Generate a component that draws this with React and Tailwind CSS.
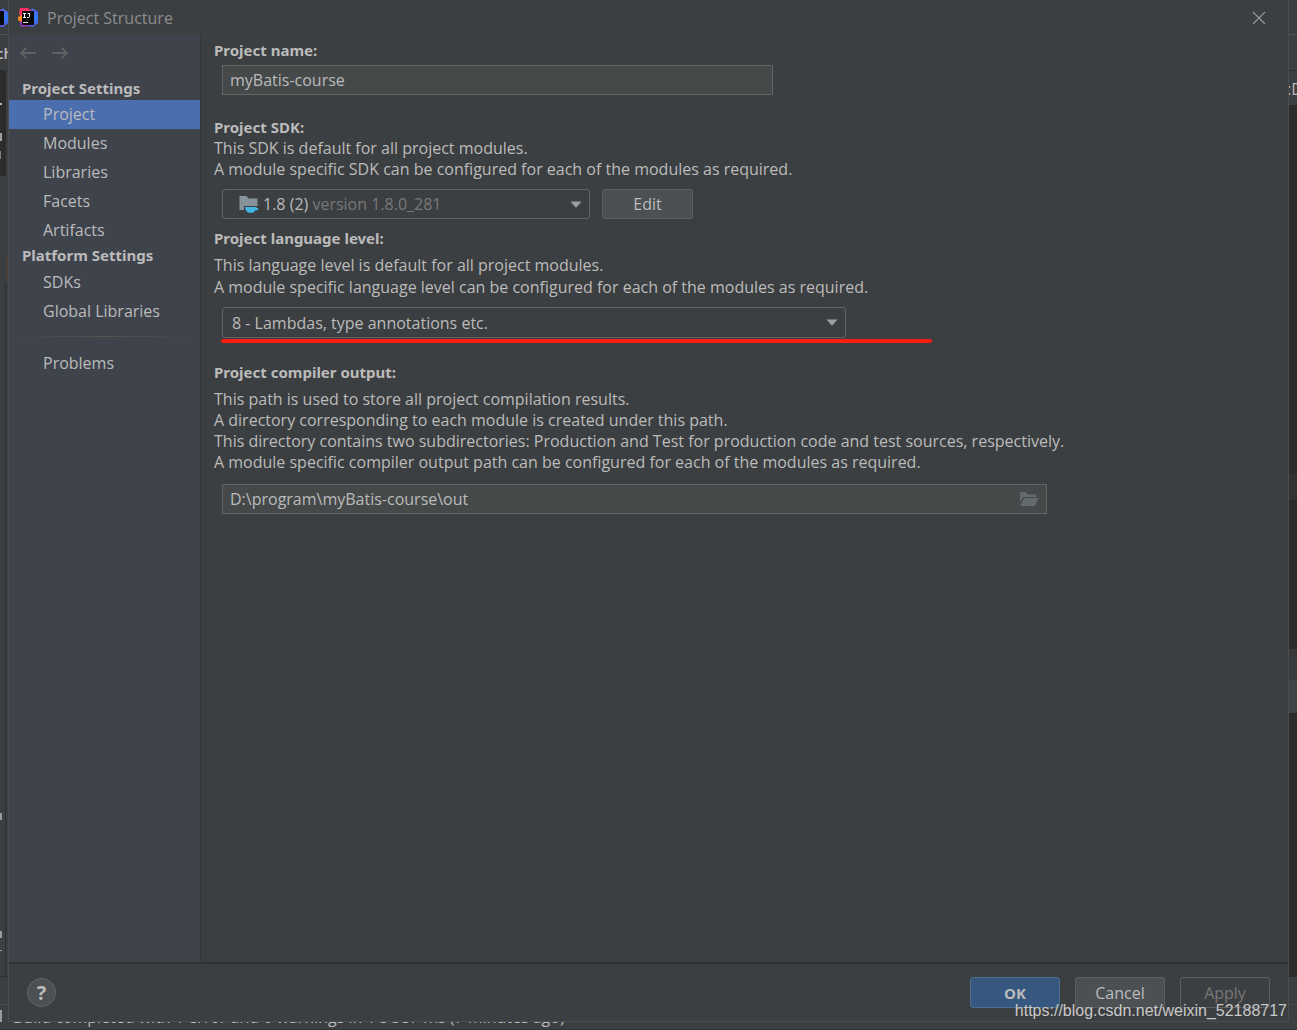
import React from "react";

const FIELD = "border border-[#646464] text-[#bbbbbb]";

function AppLogo({ className }) {
  return (
    <svg viewBox="0 0 20 20" className={className} aria-hidden="true">
      <defs>
        <linearGradient id="edge" x1="0" y1="0" x2="0" y2="1">
          <stop offset="0" stopColor="#5a62e8" />
          <stop offset="0.5" stopColor="#2f7cf2" />
          <stop offset="1" stopColor="#5a5ae0" />
        </linearGradient>
      </defs>
      <path d="M12 2 L15 0.500 L20 4 V15 L15 19 L9 18 L8 10 Z" fill="url(#edge)" />
      <path d="M2 0 H10 L14 4 L12 10 L3 10 L1 5 Z" fill="#fb2f63" />
      <path d="M0 9 L4 7 V15 L0 12 Z" fill="#fb8b24" />
      <path d="M2 14 L7 12 L11 18 L3 19 Z" fill="#9a35c8" />
      <rect x="4" y="3" width="12" height="14" fill="#0a0a0c" />
      <path d="M5 5.500H8M6.500 5V10M5 9.500H8M9.500 5.500H12M11.500 5V8.500Q11.500 9.500 10.500 9.500H9" fill="none" stroke="#fff" strokeWidth="1" />
      <rect x="5" y="14" width="5" height="1" fill="#ddd" />
    </svg>
  );
}

function Arrow({ flip }) {
  return (
    <svg viewBox="0 0 16 12" className={flip ? "h-3 w-4 rotate-180" : "h-3 w-4"} fill="none" stroke="currentColor" strokeWidth="2" aria-hidden="true">
      <path d="M16 6H1M6.500 0.800L1.200 6l5.300 5.200" />
    </svg>
  );
}

function Triangle() {
  return (
    <svg viewBox="0 0 12 7" className="pointer-events-none absolute right-[7px] h-[7px] w-3" aria-hidden="true">
      <path d="M0.500 0.500H11.500L6 6.800Z" fill="#9da0a2" />
    </svg>
  );
}

function NavItem({ children, active }) {
  return (
    <li>
      <button
        type="button"
        className={
          active
            ? "block h-[29px] w-full bg-[#4b6eaf] pb-px pl-[34px] text-left"
            : "block h-[29px] w-full pb-[2px] pl-[34px] text-left"
        }
      >
        {children}
      </button>
    </li>
  );
}

function Sidebar() {
  return (
    <nav className="w-[192px] shrink-0 border-r border-[#323435] bg-[#3f434c]" aria-label="Settings">
      <div className="flex h-9 items-center gap-4 pl-[11px] text-[#5f6163]">
        <button type="button" aria-label="Back"><Arrow /></button>
        <button type="button" aria-label="Forward"><Arrow flip /></button>
      </div>
      <h2 className="mt-1 h-[25px] pl-[13px] font-['Noto_Sans',sans-serif] text-[15px] leading-[26px] font-bold">Project Settings</h2>
      <ul>
        <NavItem active>Project</NavItem>
        <NavItem>Modules</NavItem>
        <NavItem>Libraries</NavItem>
        <NavItem>Facets</NavItem>
        <NavItem>Artifacts</NavItem>
      </ul>
      <h2 className="h-[23px] pl-[13px] font-['Noto_Sans',sans-serif] text-[15px] leading-5 font-bold">Platform Settings</h2>
      <ul>
        <NavItem>SDKs</NavItem>
        <NavItem>Global Libraries</NavItem>
      </ul>
      <hr className="mx-2 mt-[10px] mb-3 h-px border-0 bg-linear-to-r from-transparent via-[#555550] to-transparent" />
      <ul>
        <NavItem>Problems</NavItem>
      </ul>
    </nav>
  );
}

function Label({ htmlFor, className, children }) {
  return (
    <label htmlFor={htmlFor} className={"block font-['Noto_Sans',sans-serif] text-[15px] leading-[22px] font-bold " + className}>
      {children}
    </label>
  );
}

function Main() {
  return (
    <main className="min-w-0 flex-1 pt-1 pl-[13px]">
      <Label htmlFor="name" className="">Project name:</Label>
      <input id="name" defaultValue="myBatis-course" className={FIELD + " mt-1 ml-2 block h-[30px] w-[551px] bg-[#45494a] px-[7px] pb-px"} />

      <Label htmlFor="sdk" className="mt-[21px]">Project SDK:</Label>
      <div className="leading-[21px]">
        <p>This SDK is default for all project modules.</p>
        <p>A module specific SDK can be configured for each of the modules as required.</p>
      </div>
      <div className="mt-[9px] ml-2 flex items-center gap-3">
        <div className="relative flex h-[30px] w-[368px] items-center rounded-[3px] border border-[#646464]">
          <svg viewBox="0 0 20 18" className="pointer-events-none absolute left-4 h-[18px] w-5" aria-hidden="true">
            <path d="M0.500 1H7.500L9.500 3.500H18.500V11H5V15H0.500Z" fill="#87939a" />
            <path d="M6 12H17.500V13H19V15.300H16.500Q15.500 17.500 13.500 17.700H10Q6.500 17 6 12Z" fill="#40b6e0" />
          </svg>
          <select id="sdk" className="size-full appearance-none bg-transparent pl-10 text-transparent outline-none">
            <option aria-label="1.8 (2) version 1.8.0_281"></option>
          </select>
          <span className="pointer-events-none absolute left-10 pb-px whitespace-pre">
            1.8 (2) <span className="text-[#787878]">version 1.8.0_281</span>
          </span>
          <Triangle />
        </div>
        <button type="button" className="h-[30px] w-[91px] rounded-[3px] border border-[#5e6060] bg-[#4c5052]">Edit</button>
      </div>

      <Label htmlFor="level" className="mt-2">Project language level:</Label>
      <p className="mt-[5px]">This language level is default for all project modules.</p>
      <p>A module specific language level can be configured for each of the modules as required.</p>
      <div className="relative mt-[9px] ml-2 flex h-[31px] w-[624px] items-center rounded-[3px] border border-[#646464]">
        <select id="level" className="size-full appearance-none bg-transparent pl-[9px] outline-none">
          <option>8 - Lambdas, type annotations etc.</option>
        </select>
        <Triangle />
        <span className="absolute top-[31px] -left-[2px] h-1 w-[711px] rounded-full bg-[#fb1d12]" />
      </div>

      <Label htmlFor="out" className="mt-[23px]">Project compiler output:</Label>
      <div className="mt-[6px] leading-[21px]">
        <p>This path is used to store all project compilation results.</p>
        <p>A directory corresponding to each module is created under this path.</p>
        <p>This directory contains two subdirectories: Production and Test for production code and test sources, respectively.</p>
        <p>A module specific compiler output path can be configured for each of the modules as required.</p>
      </div>
      <div className={FIELD + " mt-[11px] ml-2 flex h-[30px] w-[825px] items-center bg-[#45494a] pr-[7px]"}>
        <input id="out" defaultValue="D:\program\myBatis-course\out" className="h-full min-w-0 flex-1 bg-transparent pb-px pl-[7px] outline-none" />
        <button type="button" aria-label="Browse">
          <svg viewBox="0 0 20 16" className="h-4 w-5" fill="#626a6e" aria-hidden="true">
            <path d="M1 1H7L8.500 3.500H17V6H4L1 11Z" />
            <path d="M5 7H19.500L16 15H1Z" />
          </svg>
        </button>
      </div>
    </main>
  );
}

function LeftEdge() {
  return (
    <aside className="flex w-2 shrink-0 flex-col overflow-hidden">
      <div className="h-[35px] border-b border-[#515354]">
        <AppLogo className="mt-2 -ml-3 size-5 max-w-none" />
      </div>
      <p className="-ml-1 flex h-9 items-center border-b border-[#2d2f30] text-[15px] font-semibold">ch</p>
      <div className="h-[105px] w-[6px] bg-[#2b2b2b] pt-8">
        <div className="h-[2px] w-[2px] bg-[#bbbbbb]" />
        <div className="mt-7 h-2 w-[2px] bg-[#a0a0a0]" />
        <div className="mt-[10px] h-2 w-px bg-[#808080]" />
      </div>
      <div className="flex flex-1 flex-col border-b border-[#2d2f30]">
        <div className="ml-[6px] h-[25px] w-[2px] bg-[#4a4038] mt-[81px]" />
        <div className="w-[6px] flex-1 border-r border-[#2d2f30] pt-[531px]">
          <div className="h-[7px] w-[2px] bg-[#9a9c9d]" />
          <div className="mt-[111px] h-[7px] w-[2px] bg-[#9a9c9d]" />
          <div className="mt-3 h-px w-[2px] bg-[#9a9c9d]" />
        </div>
      </div>
      <div className="h-7 border-b border-[#4a4848]" />
      <div className="h-[17px] pt-[5px]">
        <div className="h-3 w-[2px] bg-[#9a9c9d]" />
      </div>
    </aside>
  );
}

function RightEdge() {
  return (
    <aside className="flex w-2 shrink-0 flex-col overflow-hidden">
      <div className="h-[35px] border-b border-[#515354]" />
      <div className="h-9 border-b border-[#2d2f30]" />
      <p className="-ml-[2px] h-[34px] pt-[7px]">:D</p>
      <div className="h-[369px] bg-[#2b2b2b]" />
      <div className="h-[26px] bg-[#323232]" />
      <div className="h-[149px] bg-[#2b2b2b]" />
      <div className="h-[31px] bg-[#37393a]" />
      <div className="h-[33px] bg-[#3f4445]" />
      <div className="h-[264px] bg-[#2b2b2b]" />
      <div className="h-7 border-b border-[#4a4848]" />
    </aside>
  );
}

export default function App() {
  return (
    <div className="flex h-screen flex-col overflow-hidden bg-[#3c3f41] font-['Open_Sans',sans-serif] text-[16px] leading-[22px] text-[#bbbbbb]">
      <div className="flex min-h-0 flex-1">
        <LeftEdge />
        <div className="flex min-w-0 flex-1 flex-col border-x border-b border-[#4a4d4f]">
          <header className="flex h-[35px] shrink-0 items-center pr-[22px] pl-[9px] text-[#8b8d8f]">
            <AppLogo className="size-5" />
            <h1 className="ml-[9px] flex-1">Project Structure</h1>
            <button type="button" aria-label="Close">
              <svg viewBox="0 0 14 14" className="size-[14px]" fill="none" stroke="#949697" strokeWidth="1.200" aria-hidden="true">
                <path d="M1 1L13 13M13 1L1 13" />
              </svg>
            </button>
          </header>
          <div className="flex min-h-0 flex-1">
            <Sidebar />
            <Main />
          </div>
          <footer className="relative flex h-[59px] shrink-0 items-center border-t-2 border-[#323232] px-[18px]">
            <button type="button" aria-label="Help" className="size-[29px] rounded-full border border-[#626566] bg-[#4c5052] text-xl font-bold">?</button>
            <div className="ml-auto flex gap-[15px]">
              <button type="button" className="h-[31px] w-[90px] rounded-[3px] border border-[#4c708c] bg-[#365880] text-[15px] font-bold">OK</button>
              <button type="button" className="h-[31px] w-[90px] rounded-[3px] border border-[#5e6060] bg-[#4c5052]">Cancel</button>
              <button type="button" className="h-[31px] w-[90px] rounded-[3px] border border-[#5e6060] text-[#777777]">Apply</button>
            </div>
            <span className="absolute right-px -bottom-px font-['Liberation_Sans',sans-serif] text-[16px] leading-[22px] text-[#c8c8c8]">https://blog.csdn.net/weixin_52188717</span>
          </footer>
        </div>
        <RightEdge />
      </div>
      <div className="flex h-2 items-end overflow-hidden border-b border-[#333637] pb-px pl-[13px]">
        <p>Build completed with 1 error and 0 warnings in 1 s 387 ms (7 minutes ago)</p>
      </div>
    </div>
  );
}
